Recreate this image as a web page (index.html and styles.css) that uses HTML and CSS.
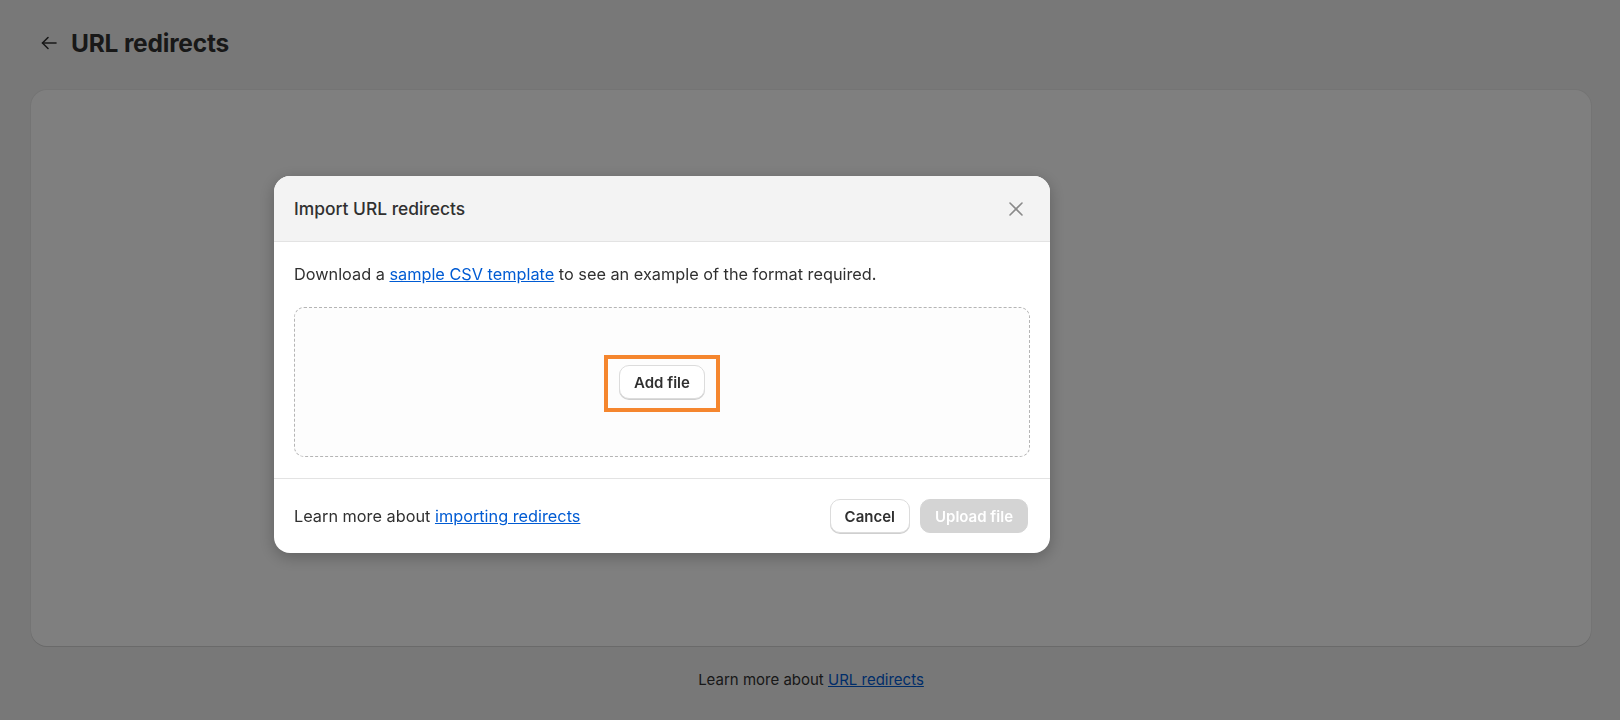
FILE: index.html
```html
<!DOCTYPE html>
<html lang="en">
<head>
  <meta charset="UTF-8" />
  <title>URL redirects</title>
  <link rel="stylesheet" href="styles.css">
</head>
<body>

  <div class="page">
    <div class="page-header">
      <a class="back" href="#" aria-label="Back">
        <svg width="18" height="18" viewBox="0 0 18 18" fill="none" stroke="currentColor" stroke-width="1.6" stroke-linecap="round" stroke-linejoin="round">
          <path d="M16 9H2.5" />
          <path d="M8 3.5L2.5 9L8 14.5" />
        </svg>
      </a>
      <h1>URL redirects</h1>
    </div>

    <div class="card"></div>

    <p class="page-footer">Learn more about <a href="#">URL redirects</a></p>
  </div>

  <div class="backdrop">
    <div class="modal">
      <div class="modal-header">
        <h2>Import URL redirects</h2>
        <button class="close" aria-label="Close">
          <svg width="14" height="14" viewBox="0 0 14 14" fill="none" stroke="currentColor" stroke-width="1.6" stroke-linecap="round">
            <path d="M1 1L13 13" />
            <path d="M13 1L1 13" />
          </svg>
        </button>
      </div>

      <div class="modal-body">
        <p>Download a <a href="#">sample CSV template</a> to see an example of the format required.</p>
        <div class="dropzone">
          <span class="highlight">
            <button class="btn">Add file</button>
          </span>
        </div>
      </div>

      <div class="modal-footer">
        <p>Learn more about <a href="#">importing redirects</a></p>
        <div class="actions">
          <button class="btn">Cancel</button>
          <button class="btn btn-primary" disabled>Upload file</button>
        </div>
      </div>
    </div>
  </div>

</body>
</html>
```

FILE: styles.css
```css
body {
  margin: 0;
  background: #f1f1f1;
  color: #303030;
  font-family: Inter, "Noto Sans", sans-serif;
  font-size: 16.3px;
}
a {
  color: #005bd3;
}
.page {
  padding: 0 29px 0 31px;
}
.page-header {
  display: flex;
  align-items: center;
  height: 90px;
  padding-bottom: 4px;
  box-sizing: border-box;
}
.back {
  display: flex;
  color: #303030;
  margin-left: 9px;
  margin-right: 13px;
}
.page-header h1 {
  margin: 0;
  font-size: 24.5px;
  font-weight: 700;
  color: #303030;
  letter-spacing: -0.2px;
}
.card {
  height: 556px;
  background: #fff;
  border-radius: 16px;
  box-shadow: 0 1px 0 #d4d4d4, 0 0 0 1px #e8e8e8;
}
.page-footer {
  margin: 0;
  height: 68px;
  line-height: 68px;
  text-align: center;
  font-size: 15px;
}

.backdrop {
  position: fixed;
  inset: 0;
  background: rgba(0, 0, 0, 0.5);
  padding: 176px 0 0 274px;
}
.modal {
  width: 776px;
  background: #fff;
  border-radius: 16px;
  overflow: hidden;
  box-shadow: 0 4px 16px rgba(0, 0, 0, 0.25);
}
.modal-header {
  display: flex;
  align-items: center;
  justify-content: space-between;
  height: 65px;
  padding: 0 20px;
  background: #f3f3f3;
  border-bottom: 1px solid #e3e3e3;
}
.modal-header h2 {
  margin: 0;
  font-size: 17.4px;
  font-weight: 550;
}
.close {
  display: flex;
  border: none;
  background: none;
  padding: 0;
  margin-right: 7px;
  color: #8a8a8a;
  cursor: pointer;
}
.modal-body {
  padding: 20px 20px 21px;
  border-bottom: 1px solid #e3e3e3;
}
.modal-body p {
  margin: 0 0 21px;
  line-height: 24px;
}
.dropzone {
  height: 150px;
  box-sizing: border-box;
  border: 1px dashed #b5b5b5;
  border-radius: 10px;
  background: #fdfdfd;
  display: flex;
  align-items: center;
  justify-content: center;
}
.highlight {
  display: inline-flex;
  border: 4px solid #f5862e;
  padding: 6px 11px 9px;
  margin-top: 3px;
}
.btn {
  height: 34px;
  padding: 0 14px;
  font-family: inherit;
  font-size: 15px;
  font-weight: 600;
  color: #303030;
  background: #fff;
  border: 1px solid #dcdcdc;
  border-radius: 10px;
  box-shadow: 0 1px 0 #cfcfcf;
  cursor: pointer;
}
.btn-primary {
  background: #d4d4d4;
  border-color: #d4d4d4;
  color: #fff;
  box-shadow: none;
}
.modal-footer {
  display: flex;
  align-items: center;
  justify-content: space-between;
  padding: 20px 22px 20px 20px;
}
.modal-footer p {
  margin: 0;
}
.actions {
  display: flex;
  gap: 10px;
}
```
